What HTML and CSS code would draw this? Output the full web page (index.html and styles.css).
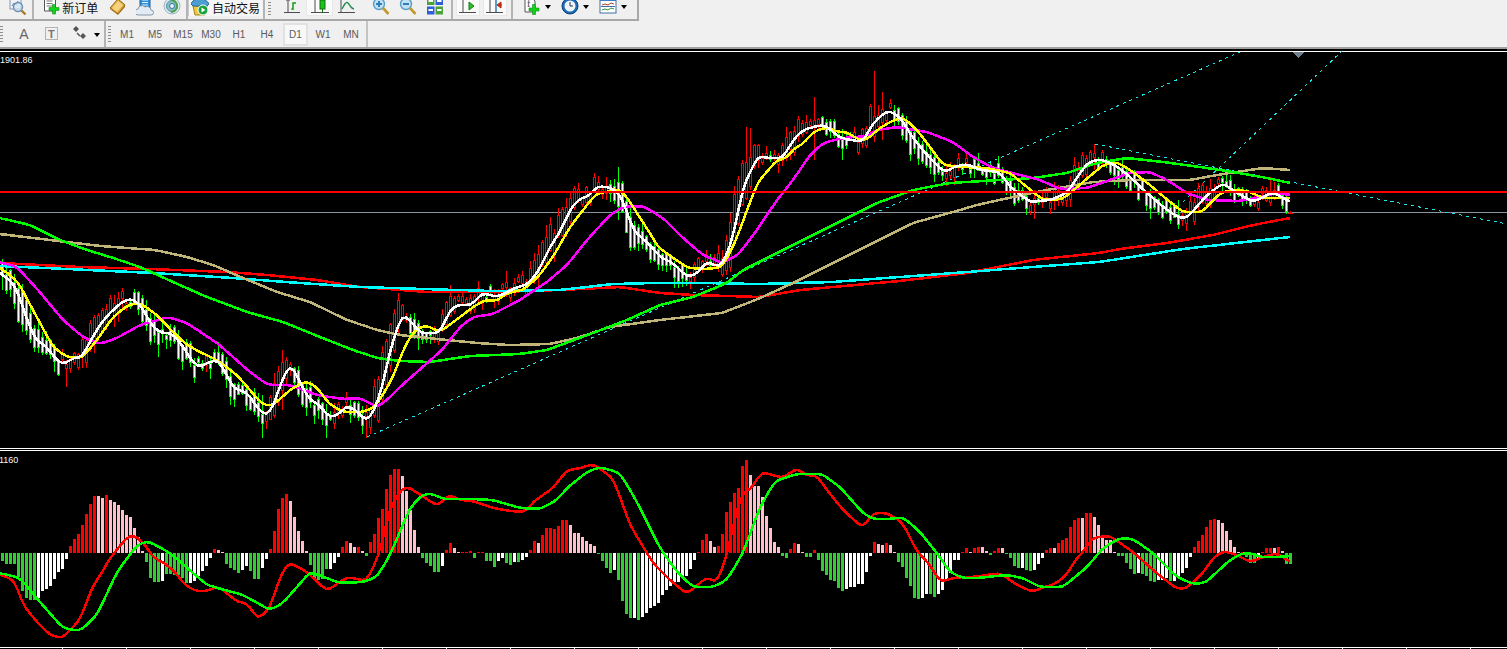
FILE: index.html
```html
<!DOCTYPE html>
<html lang="zh">
<head>
<meta charset="utf-8">
<title>MetaTrader</title>
<link rel="stylesheet" href="styles.css">
</head>
<body>
<div class="bars">
  <div class="bar-main">
    <span class="slot first"><svg class="ico" viewBox="0 0 18 18"><rect x="1" y="-2" width="11" height="13" fill="#eef2f6" stroke="#8a97a6"/><path d="M3 8l2-3 2 2 2-4" fill="none" stroke="#5b7fb0"/><circle cx="9" cy="9" r="4.5" fill="#cfe4f5" fill-opacity=".7" stroke="#6c8fae" stroke-width="1.4"/><path d="M12.5 12.5l4 4" stroke="#a9792c" stroke-width="2.4"/></svg></span>
    <span class="sep"></span>
    <span class="order">
      <svg class="ico" viewBox="0 0 18 18"><path d="M1.500-1h8l3 3v11h-11z" fill="#fff" stroke="#555"/><path d="M3.500 3h6M3.500 5.500h6M3.500 8h6" stroke="#777"/><path d="M9.500 6.500h3v3h3.500v3h-3.500v3.500h-3v-3.500h-3.500v-3h3.500z" fill="#14d21c" stroke="#0c8f12" stroke-width=".6"/></svg>
      <span class="cjk">新订单</span>
    </span>
    <span class="slot"><svg class="ico" viewBox="0 0 18 18"><path d="M1 10l8-9 7 6-7 9z" fill="#e4ab3c" stroke="#8d6414"/><path d="M3 10l6-7 5 4-6 7z" fill="#f5d37e"/><path d="M1 10l8 6 7-9v2l-7 8-8-6z" fill="#a8701c"/></svg></span>
    <span class="slot"><svg class="ico" viewBox="0 0 18 18"><rect x="4" y="-1" width="10" height="11" fill="#2f8fdc" stroke="#1c5e9e"/><path d="M6 2h6M6 4.500h6M6 7h6" stroke="#d9eeff"/><path d="M2 17a3 3 0 0 1 0-6 4 4 0 0 1 7-2 4 4 0 0 1 6 3 2.500 2.500 0 0 1 0 5z" fill="#e2eaf3" stroke="#8296ad"/></svg></span>
    <span class="slot"><svg class="ico" viewBox="0 0 18 18"><circle cx="9" cy="8" r="8" fill="#dfeaf0" stroke="#9db5c3"/><circle cx="9" cy="8" r="5.500" fill="#8fc0c8" stroke="#4e8f9a"/><path d="M8 2a6 6 0 0 1 0 12" fill="none" stroke="#4aa24a" stroke-width="2"/><circle cx="9" cy="8" r="2.500" fill="#e8f4f6" stroke="#2b78a8"/></svg></span>
    <span class="sep narrow"></span>
    <span class="auto">
      <svg class="ico" viewBox="0 0 18 18"><path d="M2 8l2 9h10l2-9z" fill="#f0c93c" stroke="#a58417"/><path d="M0 6c2-7 15-7 18 0l-2 2H2z" fill="#4c9ed4" stroke="#296b99"/><circle cx="12" cy="12" r="5" fill="#14a33a" stroke="#fff"/><path d="M10.500 9.500l4 2.500-4 2.500z" fill="#fff"/></svg>
      <span class="cjk">自动交易</span>
    </span>
    <span class="sep"></span>
    <span class="grip"></span>
    <span class="slot"><svg class="ico" viewBox="0 0 18 18"><path d="M5 1v14M1 14.500h16" stroke="#4c4c4c" fill="none"/><path d="M5 1l-1.500 2M5 1l1.500 2" stroke="#4c4c4c" fill="none"/><path d="M10 12V5h3" stroke="#129c12" fill="none" stroke-width="1.500"/><path d="M8 11h2" stroke="#129c12"/></svg></span>
    <span class="slot on"><svg class="ico" viewBox="0 0 18 18"><path d="M4 1v14M0 14.500h18" stroke="#4c4c4c" fill="none"/><path d="M11.500-1v16" stroke="#116f11"/><rect x="9" y="2" width="5" height="9" fill="#18c418" stroke="#116f11"/></svg></span>
    <span class="slot"><svg class="ico" viewBox="0 0 18 18"><path d="M3 1v14M0 14.500h17" stroke="#4c4c4c" fill="none"/><path d="M4 11c2-4 4-8 6-6s3 6 6 6" stroke="#1d8a4a" fill="none" stroke-width="1.300"/></svg></span>
    <span class="gap-s"></span>
    <span class="slot"><svg class="ico" viewBox="0 0 18 18"><circle cx="7" cy="6" r="5.500" fill="#bfe0f5" stroke="#5a9cc8" stroke-width="1.400"/><path d="M4 6h6M7 3v6" stroke="#2f7fb5" stroke-width="2"/><path d="M11 10l5.500 6" stroke="#c29a2c" stroke-width="2.600"/></svg></span>
    <span class="slot"><svg class="ico" viewBox="0 0 18 18"><circle cx="7" cy="6" r="5.500" fill="#bfe0f5" stroke="#5a9cc8" stroke-width="1.400"/><path d="M4 6h6" stroke="#2f7fb5" stroke-width="2"/><path d="M11 10l5.500 6" stroke="#c29a2c" stroke-width="2.600"/></svg></span>
    <span class="slot"><svg class="ico" viewBox="0 0 18 18"><rect x="1" y="-1" width="7.500" height="8" fill="#4aa238"/><rect x="9.500" y="-1" width="7.500" height="8" fill="#2f5fd8"/><rect x="1" y="8.500" width="7.500" height="8" fill="#2f5fd8"/><rect x="9.500" y="8.500" width="7.500" height="8" fill="#4aa238"/><path d="M2.500 3h4.500M11 3h4.500M2.500 12h4.500M11 12h4.500" stroke="#fff" stroke-width="2"/></svg></span>
    <span class="sep wide"></span>
    <span class="slot tight on"><svg class="ico" viewBox="0 0 18 18"><path d="M4 1v14M0 14.500h17" stroke="#4c4c4c" fill="none"/><path d="M10 4l5 4-5 4z" fill="#2bc02b" stroke="#128012"/></svg></span>
    <span class="slot tight on"><svg class="ico" viewBox="0 0 18 18"><path d="M4 1v14M0 14.500h17" stroke="#4c4c4c" fill="none"/><path d="M10 1v13" stroke="#1f6fb0" stroke-width="1.400"/><path d="M16 7h-3M15 4l-4 3 4 3z" fill="#d83a1c" stroke="#a82a10"/></svg></span>
    <span class="sep"></span>
    <span class="drop lead"><svg class="ico" viewBox="0 0 18 18"><path d="M2 0h7l3 3v11H2z" fill="#fff" stroke="#555"/><text class="glyph" x="4" y="9">f</text><path d="M9.500 6.500h3v3.500h3.500v3h-3.500v3.500h-3v-3.500h-3.500v-3h3.500z" fill="#14d21c" stroke="#0c8f12" stroke-width=".6"/></svg><i class="caret"></i></span>
    <span class="drop"><svg class="ico" viewBox="0 0 18 18"><circle cx="9" cy="8" r="8" fill="#1c6bb8" stroke="#0f3f78"/><circle cx="9" cy="8" r="5.500" fill="#eef5fb"/><path d="M9 4v4h3" stroke="#334" fill="none"/></svg><i class="caret"></i></span>
    <span class="drop"><svg class="ico" viewBox="0 0 18 18"><rect x="1" y="0" width="16" height="15" fill="#fff" stroke="#3f6f9f"/><rect x="1" y="0" width="16" height="3" fill="#3f7fc0"/><path d="M3 7l3-1 3 1 3-2 3 1" stroke="#b04020" fill="none"/><path d="M2 8.500h14" stroke="#3f6f9f"/><path d="M3 12l3-1 3 1 3-2 3 1" stroke="#2f9a3f" fill="none"/></svg><i class="caret"></i></span>
  </div>
  <div class="bar-tools">
    <span class="dots"></span>
    <span class="lit">A</span>
    <span class="slot small"><svg class="ico" viewBox="0 0 18 18"><rect x="2.500" y="2.500" width="12" height="12" fill="none" stroke="#777" stroke-dasharray="1 1"/><text class="glyph t" x="5" y="12.500">T</text></svg></span>
    <span class="slot small"><svg class="ico" viewBox="0 0 18 18"><path d="M5 1l3 3-3 3-3-3zM12 8l3 3-3 3-3-3z" fill="#555"/><path d="M6 8l3 3" stroke="#555" stroke-width="1.500"/></svg></span>
    <i class="caret solo"></i>
    <span class="sep tall"></span>
    <span class="dots inner"></span>
    <span class="tf">M1</span><span class="tf">M5</span><span class="tf">M15</span><span class="tf">M30</span><span class="tf">H1</span><span class="tf">H4</span><span class="tf active">D1</span><span class="tf">W1</span><span class="tf">MN</span>
  </div>
</div>
<svg id="chart" class="chart" viewBox="0 49 1507 600" width="1507" height="600" xmlns="http://www.w3.org/2000/svg"></svg>
<script src="chart.js"></script>
</body>
</html>
```
FILE: styles.css
```css
* { box-sizing: border-box; }
html, body { margin: 0; padding: 0; background: #000; overflow: hidden; }
body { width: 1507px; height: 649px; font-family: "Liberation Sans", sans-serif; }
.bars { height: 49px; background: #f0f0f0; border-bottom: 2px solid #a0a0a0; }
.bar-main { display: flex; align-items: flex-end; width: 639px; height: 21px; padding: 0 0 3px 4px; border-right: 2px solid #a8a8a8; border-bottom: 2px solid #a8a8a8; }
.bar-tools { display: flex; align-items: center; width: 368px; height: 26px; border-right: 2px solid #c4c4c4; color: #5a5a5a; font-size: 10px; }
.ico { display: block; width: 18px; height: 18px; overflow: hidden; flex: none; }
.slot { display: flex; justify-content: center; align-items: flex-end; width: 28px; height: 18px; }
.slot.on { background: #fafafa; outline: 1px solid #e8e8e8; outline-offset: -1px; }
.slot.tight { width: 25px; margin-right: 3px; }
.slot.small { width: 28px; height: 20px; align-items: center; }
.sep { width: 2px; height: 21px; margin: 0 2px -3px 1px; background: #b4b4b4; flex: none; align-self: flex-end; }
.sep.narrow { margin: 0 0 -3px 0; }
.sep.wide { margin: 0 3px -3px 2px; }
.sep.tall { height: 26px; margin: 0 2px 0 4px; align-self: center; }
.order { display: flex; align-items: flex-end; gap: 1px; width: 70px; padding-left: 7px; height: 18px; }
.cjk { font-family: "Noto Sans CJK SC", sans-serif; font-size: 12px; line-height: 16px; color: #111; }
.auto { display: flex; align-items: flex-end; gap: 3px; width: 76px; height: 18px; padding-left: 2px; background: #f6f6f6; border-left: 1px solid #c8c8c8; }
.grip { width: 3px; height: 17px; margin: 0 8px 0 1px; background: repeating-linear-gradient(#8c8c8c 0 1px, transparent 1px 3px); }
.gap-s { width: 7px; }
.drop { display: flex; align-items: flex-end; gap: 4px; width: 39px; height: 18px; }
.drop.lead { margin-left: 8px; }
.caret { display: block; width: 0; height: 0; margin-bottom: 7px; border: 3px solid transparent; border-top: 4px solid #000; border-bottom: 0; }
.caret.solo { margin: 1px 0 0 0; }
.glyph { font-family: "Liberation Serif", serif; font-size: 10px; fill: #444; }
.glyph.t { font-family: "Liberation Sans", sans-serif; font-weight: bold; font-size: 11px; fill: #777; }
.dots { width: 3px; height: 17px; margin-right: 16px; background: repeating-linear-gradient(#8c8c8c 0 1px, transparent 1px 3px); flex: none; }
.dots.inner { margin-right: 2px; }
.lit { width: 10px; font-size: 14px; color: #666; text-align: center; margin-right: 9px; }
.tf { display: flex; align-items: center; justify-content: center; width: 28px; height: 23px; font-size: 10px; }
.tf.active { background: #f8f8f8; border: 2px solid #e2e2e2; width: 25px; margin: 0 1px 0 2px; }
.chart { display: block; background: #000; shape-rendering: crispEdges; }
.lbl { font-family: "Liberation Sans", sans-serif; font-size: 9px; fill: #f4f4f4; shape-rendering: auto; }
```
FILE: chart.js
```js
var W=[0,272,3,275,13,283,18,293,23,308,32,333,38,342,45,345,55,358,63,365,73,358,82,357,92,338,102,322,110,313,122,302,132,298,143,308,150,323,160,333,172,333,182,345,190,358,198,367,210,362,218,360,227,375,233,388,248,393,257,408,267,416,273,407,282,380,291,363,300,383,310,400,320,405,328,417,338,415,347,405,358,412,367,422,377,405,387,367,390,350,402,315,410,320,420,333,440,333,450,310,458,305,472,305,482,293,497,297,507,292,517,287,527,285,538,272,550,247,560,232,570,210,578,200,590,195,597,186,613,188,622,198,633,230,642,238,650,245,660,257,673,263,687,277,697,274,707,261,718,267,725,260,733,237,743,187,758,156,767,158,783,158,793,140,803,130,817,126,825,125,840,138,863,142,873,123,888,110,900,117,913,138,927,155,945,173,953,167,967,164,980,170,1000,172,1010,187,1030,202,1050,200,1067,193,1087,163,1100,159,1115,165,1130,177,1147,193,1167,210,1180,218,1187,218,1207,195,1223,183,1237,193,1253,202,1273,192,1290,202];
var Y=[0,267,18,282,33,310,53,347,67,357,82,358,97,340,113,317,128,305,140,303,157,315,173,332,187,345,200,352,217,360,237,375,250,390,262,404,272,406,290,390,305,381,317,387,328,403,343,412,363,412,375,407,390,383,399,362,403,350,413,332,425,325,440,332,460,317,473,307,485,300,497,301,507,293,523,290,538,277,553,257,570,227,587,205,597,193,608,192,617,188,627,197,640,218,650,233,658,247,672,257,688,268,707,269,722,267,735,243,747,210,758,182,777,160,787,158,795,147,802,145,813,132,827,127,837,132,847,132,857,139,867,140,877,130,890,122,903,117,917,130,930,147,943,165,963,167,987,168,1010,173,1027,187,1043,200,1063,199,1083,182,1103,165,1117,162,1133,172,1150,185,1170,202,1183,212,1202,212,1220,193,1233,190,1248,191,1263,198,1290,198];
var M=[0,262,17,267,38,290,63,320,83,337,100,344,117,338,140,325,168,317,187,323,217,343,250,372,268,385,290,385,317,395,343,399,360,398,377,407,387,400,400,387,442,350,460,327,473,317,493,314,520,300,547,282,567,265,587,240,610,215,623,207,643,206,663,218,683,238,703,255,722,263,738,255,757,230,777,200,793,180,810,155,823,143,843,138,867,136,877,130,897,127,927,132,953,142,973,157,993,168,1020,175,1040,180,1060,189,1087,188,1110,180,1130,173,1150,172,1167,180,1187,193,1207,200,1240,201,1260,197,1277,193,1290,195];
var G=[0,218,30,225,60,240,87,250,110,257,140,267,173,282,207,297,247,312,283,322,320,337,353,350,377,358,400,361,430,362,470,356,520,354,547,350,593,333,627,320,660,305,693,297,727,283,743,270,777,253,843,220,877,203,913,190,950,183,1000,180,1033,178,1067,173,1097,163,1127,158,1163,162,1200,167,1233,172,1267,178,1290,183];
var T=[0,234,50,240,100,246,155,250,187,257,213,265,243,278,277,292,310,302,347,320,377,330,400,335,437,339,477,343,510,345,550,344,577,338,610,327,660,320,722,313,758,299,793,283,833,263,873,243,913,223,953,212,977,205,1013,197,1047,190,1093,182,1133,180,1190,180,1217,175,1263,168,1290,170];
var R=[0,263,20,264,80,267,150,269,227,272,267,275,317,280,360,287,427,292,493,292,560,290,620,287,660,293,693,295,760,297,800,290,900,281,967,273,1033,260,1099,253,1120,249,1167,243,1213,235,1253,225,1290,218];
var C=[0,266,67,269,153,273,233,278,300,283,360,287,423,289,493,291,560,290,613,284,653,283,700,283,760,284,833,282,967,272,1099,262,1183,249,1290,237];
var HR=[0,574,15,581,23,605,37,622,50,635,62,638,70,630,80,620,93,585,103,572,107,562,123,542,130,535,138,538,147,547,153,558,163,562,173,570,187,587,200,592,213,589,217,586,227,593,237,602,247,603,258,619,270,608,277,585,287,563,293,564,307,572,327,591,347,577,367,581,380,552,390,508,403,487,410,488,425,498,438,506,443,500,450,495,460,500,473,501,493,508,510,511,525,512,533,502,553,488,567,470,577,469,593,464,613,478,623,505,630,525,653,563,670,580,687,594,707,577,717,583,727,555,735,518,742,493,750,490,762,472,783,478,797,468,807,476,817,475,823,485,843,510,863,528,873,513,887,513,903,523,917,552,928,562,940,582,953,578,963,577,973,577,1000,573,1017,585,1033,592,1043,587,1053,585,1067,575,1075,560,1085,550,1090,540,1097,537,1110,536,1133,552,1153,570,1177,589,1187,588,1203,573,1213,558,1223,551,1237,555,1250,562,1263,557,1277,553,1290,562];
var HG=[0,573,20,578,40,602,63,628,80,631,97,615,117,572,137,545,148,541,170,553,207,585,243,595,270,610,283,603,310,572,340,583,363,582,377,577,390,555,410,508,423,494,433,494,443,499,473,499,493,500,520,508,540,509,557,500,567,488,587,472,600,467,620,473,637,502,660,548,677,572,693,587,713,587,727,580,743,553,760,507,775,481,797,474,822,474,840,487,863,513,873,519,890,519,903,517,920,532,937,553,950,572,963,578,977,578,1007,575,1023,578,1040,587,1063,587,1087,567,1103,548,1120,538,1133,539,1153,553,1177,577,1193,584,1205,583,1230,560,1243,553,1250,553,1260,557,1277,557,1290,556];
var HIST="g8 g11 g11 g11 g24 g38 g45 g47 g47 w45 w38 w36 w33 w26 w19 w16 w6 r7 r14 r19 r28 r39 r49 r57 p57 p55 r58 p53 p51 p48 p43 p38 p36 p25 p16 p2 g9 g25 g29 g29 w28 g21 g21 g22 g22 g25 g30 w30 w28 w23 w18 w13 w5 r4 p3 p1 g11 g15 g17 g20 w17 w13 g18 g26 g26 w15 w6 r4 r22 r44 r55 r59 p52 p36 p22 p12 p2 g12 g25 g27 g26 g16 w16 w10 w4 r6 r12 p10 p6 r6 p2 "+
"g3 r11 r19 r35 r44 r64 r78 r84 r84 p77 p62 p43 p23 p6 g5 g10 g13 g19 g19 w13 r3 r10 p5 p1 r1 r1 r2 g5 r1 r1 g8 g8 g14 w8 w5 g10 g12 w9 g9 w7 w4 r3 r12 p10 r18 r25 r25 r24 r27 r33 r33 p28 p20 p20 p16 p12 p9 p7 g1 g8 g15 g20 w17 g27 g48 g61 g65 w65 g67 w64 w60 w55 w53 w50 w42 w37 w33 w29 w29 w25 w23 w16 w7 r1 r13 r19 p12 p6 r7 r19 r41 r51 r60 r65 "+
"r87 r93 p78 p67 p67 p56 p37 p25 p11 p6 g3 g5 r4 r10 p9 p1 g4 g4 r3 g7 g18 g22 g27 g28 g35 g38 w36 w34 w34 w31 w31 w19 w3 r11 p9 p8 r10 p8 p1 g9 g14 g25 g33 g45 g46 w45 w41 g41 g44 w41 w37 w28 w20 w7 w7 r1 r5 p1 r5 r6 p6 p2 g2 r2 r5 p5 g1 g5 g13 g15 "+
"w15 g17 g18 w17 w11 w5 r3 r5 p5 r10 r13 r15 r26 r33 r35 p35 r40 r40 p36 p28 p18 p13 p13 p1 g3 g3 g10 g16 g21 w20 g21 g23 g28 g29 w27 w27 w25 g28 w28 w25 w20 w15 w4 r6 r12 r18 r26 r33 r34 p33 p30 p22 p13 p6 p1 r1 g4 g10 g10 w7 r1 r5 r5 p5 r6 p2 g11 g11";
var SPIKES={2:[262,290],66:[360,387],262:[395,438],326:[410,438],366:[405,438],282:[350,410],122:[288,310],546:[225,250],618:[167,220],746:[127,200],750:[128,190],814:[97,160],874:[71,120],882:[92,140],1034:[190,219],1094:[144,170],1178:[200,228],1270:[177,205]};
var COL={r:"#ff0000",p:"#ffc0cb",g:"#32cd32",w:"#ffffff"};
function at(a,x){for(var i=2;i<a.length;i+=2){if(x<=a[i]){var t=(x-a[i-2])/(a[i]-a[i-2]);return a[i-1]+t*(a[i+1]-a[i-1]);}}return a[a.length-1];}
function rect(x,y,w,h,c){return '<rect x="'+x+'" y="'+Math.round(y)+'" width="'+w+'" height="'+Math.max(1,Math.round(h))+'" fill="'+c+'"/>';}
function smooth(a){var s="0,"+a[1]+" ",v=[],x;for(x=2;x<=1290;x+=4)v.push([x,at(a,x)]);for(var i=0;i<v.length;i++){var p=v[Math.max(0,i-1)][1],q=v[Math.min(v.length-1,i+1)][1];s+=v[i][0]+","+((p+2*v[i][1]+q)/4).toFixed(1)+" ";}return s;}
function line(a,c,w){return '<polyline points="'+smooth(a)+'" fill="none" stroke="'+c+'" stroke-width="'+(w||2.5)+'" stroke-linejoin="round"/>';}
function dash(x1,y1,x2,y2){return '<line x1="'+x1+'" y1="'+y1+'" x2="'+x2+'" y2="'+y2+'" stroke="#19e6ea" stroke-width="1" stroke-dasharray="3 4"/>';}
var seed=7;function rnd(){seed=(seed*16807)%2147483647;return seed/2147483647;}
var out="";
out+=rect(0,51,1507,1,"#fff");
out+='<path d="M1292 52h13l-6.500 6z" fill="#708090"/>';
out+=rect(0,212,1507,1,"#8a93a3");
out+=dash(367,437,1240,52)+dash(1095,144,1507,224)+dash(1183,202,1342,51);
for(var cx=2;cx<=1286;cx+=4){
  var mid=at(W,cx+2)+(rnd()-.5)*14,slope=at(W,cx+9)-at(W,Math.max(0,cx-7));
  var len=Math.max(5,Math.abs(slope)*.7+rnd()*8),up=slope+(rnd()-.5)*10<0;
  var bTop=mid-len/2,bBot=mid+len/2;
  var hi=bTop-rnd()*rnd()*11-1,lo=bBot+rnd()*rnd()*11+1;
  if(SPIKES[cx]){hi=Math.min(hi,SPIKES[cx][0]);lo=Math.max(lo,SPIKES[cx][1]);}
  if(cx==1286){bTop=200;bBot=212;up=false;hi=196;lo=214;}
  var col=up?"#ff0000":"#00ff00";
  out+=rect(cx,hi,1,lo-hi,col);
  out+=rect(cx-1,bTop,3,bBot-bTop,col);
  out+=rect(cx,bTop+1,1,Math.max(1,bBot-bTop-2),up?"#000":"#fff");
}
out+='<path d="M1288 214l2.500-3 2.500 3z" fill="#ff0000"/>';
out+=line(R,"#ff0000")+line(C,"#00ffff")+line(T,"#c0b67a")+line(G,"#00ff00")+line(M,"#ff00ff")+line(Y,"#ffff00")+line(W,"#ffffff");
out+=rect(0,191,1507,2,"#ff0000");
out+=rect(0,448,1507,1,"#fff")+rect(0,450,1507,1,"#fff");
HIST.split(" ").forEach(function(v,i){
  var k=v.charAt(0),h=+v.slice(1),bx=1+4*i;
  if(k=="r"||k=="p")out+=rect(bx,553-h,3,h,COL[k]);else out+=rect(bx,553,3,h,COL[k]);
});
out+=line(HR,"#ff0000")+line(HG,"#00ff00");
out+=rect(0,647,1507,1,"#fff");
for(var tk=62;tk<1507;tk+=64)out+=rect(tk,648,1,1,"#fff");
out+='<text class="lbl" x="0" y="63">1901.86</text><text class="lbl" x="-1" y="463">1160</text>';
document.getElementById("chart").innerHTML=out;
```
